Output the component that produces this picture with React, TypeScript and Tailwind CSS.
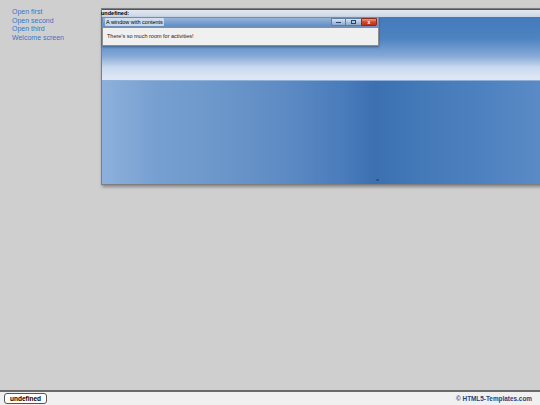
import React from "react";

const links = ["Open first", "Open second", "Open third", "Welcome screen"];

// Inner floating window with titlebar + caption buttons
function InnerWindow() {
  return (
    <div className="absolute left-0 top-0 w-[277px] flex flex-col shadow-[0_1px_2px_rgba(0,0,0,0.35)]">
      <div className="h-[10px] flex items-center justify-between border border-[#6e8fb8] bg-gradient-to-b from-[#b9cde6]/70 to-[#7fa3cf]/50">
        <span className="ml-[2px] px-[1px] leading-[8px] text-[5.5px] text-black bg-[#dfe9f5]/80 rounded-[1px]">
          A window with contents
        </span>
        <div className="flex h-[8px] mr-[1px] self-start">
          <div className="w-[15px] h-[8px] border border-[#5c7ca6] bg-gradient-to-b from-[#d6e2f0] to-[#8eaacd] rounded-bl-[2px] flex items-end justify-center pb-[2px]">
            <div className="w-[5px] h-[1px] bg-[#26456e]" />
          </div>
          <div className="w-[15px] h-[8px] border-y border-[#5c7ca6] bg-gradient-to-b from-[#d6e2f0] to-[#8eaacd] flex items-center justify-center">
            <div className="w-[5px] h-[4px] border border-[#26456e]" />
          </div>
          <div className="w-[16px] h-[8px] border border-[#8a2a1a] bg-gradient-to-b from-[#e89a85] via-[#d1452a] to-[#c4301b] rounded-br-[2px] flex items-center justify-center">
            <span className="text-[5px] leading-[5px] text-white font-bold">x</span>
          </div>
        </div>
      </div>
      <div className="h-[19px] bg-[#f0f0f0] border border-[#8c8c8c] flex items-center">
        <span
          className="ml-[4px] text-[5.5px] text-[#222]"
          style={{ fontFamily: '"Liberation Sans", sans-serif' }}
        >
          There's so much room for activities!
        </span>
      </div>
    </div>
  );
}

export default function App() {
  return (
    <div
      className="w-[540px] h-[405px] flex flex-col bg-[#cfcfcf] overflow-hidden"
      style={{ fontFamily: '"Liberation Sans", Arial, sans-serif' }}
    >
      <main className="relative flex-1">
        {/* Left nav links */}
        <nav className="flex flex-col pl-[12px] pt-[8px]">
          {links.map((l) => (
            <a key={l} className="text-[7px] leading-[8.5px] text-[#3a74c8]">
              {l}
            </a>
          ))}
        </nav>

        {/* Desktop window */}
        <div className="absolute left-[101px] top-[8px] w-[442px] h-[177px] flex flex-col border border-[#7d7d7d] shadow-[1px_2px_3px_rgba(0,0,0,0.35)]">
          <div className="h-[8px] flex items-center bg-gradient-to-b from-[#e4e9f0] to-[#c9d5e4] border-t border-[#555]">
            <span className="-ml-[1px] text-[5.5px] leading-[7px] font-bold text-black">
              undefined:
            </span>
          </div>
          <div className="relative flex-1 flex flex-col">
            <div className="h-[64px] bg-[linear-gradient(to_bottom,#4479bb_0%,#4f84c2_35%,#86a9d6_62%,#c9d9ee_80%,#dde7f4_96%)] border-b border-[#8fb0d9]" />
            <div className="flex-1 bg-[linear-gradient(to_right,#8eb0dc_0%,#77a0d0_12%,#6d98cb_25%,#5f8cc4_40%,#4a7cbb_55%,#3b70b1_62%,#4479b8_72%,#4c80bf_85%,#5a8bc6_100%)] flex items-end pl-[274px]">
              <div className="w-[3px] h-[2px] mb-[3px] bg-[#2f4f7a] rounded-full" />
            </div>
            <InnerWindow />
          </div>
        </div>
      </main>

      {/* Footer */}
      <footer className="h-[15px] flex items-center justify-between border-t-2 border-[#6a6a6a] bg-[#f0f0f0] px-[4px]">
        <button className="h-[11px] px-[5px] bg-white border border-[#555] rounded-[3px] text-[6.5px] leading-[9px] font-bold text-black">
          undefined
        </button>
        <span className="mr-[4px] text-[6.4px] font-bold text-[#2b3f7c]">
          © HTML5-Templates.com
        </span>
      </footer>
    </div>
  );
}
